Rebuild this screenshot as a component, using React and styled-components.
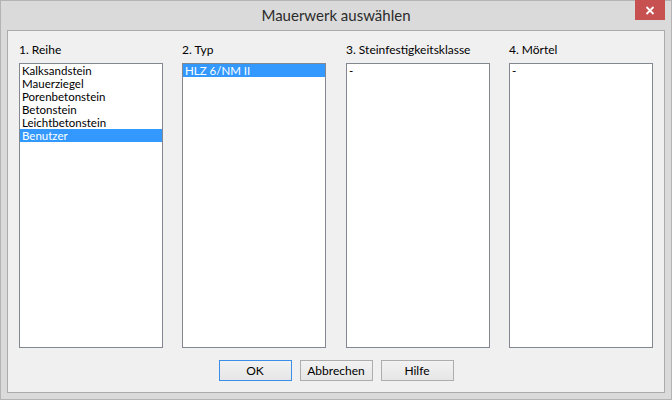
import styled, { createGlobalStyle } from 'styled-components';

const GlobalStyle = createGlobalStyle`
  html, body {
    margin: 0;
    padding: 0;
    background: #ffffff;
  }
  * {
    box-sizing: border-box;
  }
`;

const columns = [
  {
    title: '1. Reihe',
    items: ['Kalksandstein', 'Mauerziegel', 'Porenbetonstein', 'Betonstein', 'Leichtbetonstein', 'Benutzer'],
    selected: 5,
  },
  { title: '2. Typ', items: ['HLZ 6/NM II'], selected: 0 },
  { title: '3. Steinfestigkeitsklasse', items: ['-'], selected: -1 },
  { title: '4. Mörtel', items: ['-'], selected: -1 },
];

export default function App() {
  return (
    <>
      <GlobalStyle />
      <Window>
        <TitleBar>
          <span />
          <Title>Mauerwerk auswählen</Title>
          <CloseButton>
            <svg width="10" height="9" viewBox="0 0 10 9">
              <path d="M1.5 1 L8.5 8 M8.5 1 L1.5 8" stroke="#ffffff" strokeWidth="1.8" />
            </svg>
          </CloseButton>
        </TitleBar>
        <Client>
          <Columns>
            {columns.map((col) => (
              <Column key={col.title}>
                <Label>{col.title}</Label>
                <ListBox>
                  {col.items.map((item, i) => (
                    <ListItem key={item} selected={i === col.selected}>
                      {item}
                    </ListItem>
                  ))}
                </ListBox>
              </Column>
            ))}
          </Columns>
          <Buttons>
            <Button primary>OK</Button>
            <Button>Abbrechen</Button>
            <Button>Hilfe</Button>
          </Buttons>
        </Client>
      </Window>
    </>
  );
}

const Window = styled.div`
width: 672px;
height: 400px;
background: #dadada;
border: 1px solid #b4b4b4;
display: flex;
flex-direction: column;
font-family: Lato, 'Liberation Sans', sans-serif;
`;

const TitleBar = styled.div`
height: 29px;
display: grid;
grid-template-columns: 1fr auto 1fr;
align-items: start;
`;

const Title = styled.div`
font-size: 15px;
line-height: 29px;
color: #2b2b2b;
`;

const CloseButton = styled.div`
justify-self: end;
margin-top: -1px;
margin-right: 6px;
width: 30px;
height: 20px;
background: #c75050;
display: flex;
align-items: center;
justify-content: center;
`;

const Client = styled.div`
flex: 1;
margin: 0 6px 6px 6px;
border: 1px solid #ababab;
background: #f0f0f0;
padding: 11px 0 0 11px;
display: flex;
flex-direction: column;
`;

const Columns = styled.div`
display: grid;
grid-template-columns: 163px 164px 163px 144px;
`;

const Column = styled.div`
width: 144px;
display: flex;
flex-direction: column;
`;

const Label = styled.div`
font-size: 12px;
line-height: 15px;
color: #000000;
margin-bottom: 6px;
`;

const ListBox = styled.div`
height: 285px;
background: #ffffff;
border: 1px solid #828790;
display: flex;
flex-direction: column;
`;

const ListItem = styled.div`
height: 13px;
font-size: 11.5px;
line-height: 13px;
padding-left: 2px;
white-space: nowrap;
color: ${(p) => (p.selected ? '#ffffff' : '#000000')};
background: ${(p) => (p.selected ? '#3399ff' : 'transparent')};
`;

const Buttons = styled.div`
display: flex;
justify-content: center;
gap: 8px;
margin-top: 12px;
margin-left: -11px;
`;

const Button = styled.div`
width: 73px;
height: 21px;
border: 1px solid ${(p) => (p.primary ? '#3c8ee6' : '#adadad')};
background: linear-gradient(#f2f2f2, #e6e6e6);
font-size: 12px;
line-height: 19px;
text-align: center;
color: #000000;
`;
